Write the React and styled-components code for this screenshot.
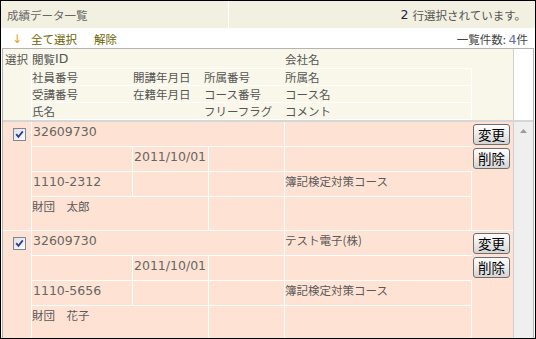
import styled, { createGlobalStyle } from 'styled-components'

const GlobalStyle = createGlobalStyle`
    html, body {
        margin: 0;
        padding: 0;
        background: #ffffff;
    }
    body {
        font-family: "Noto Sans CJK JP", sans-serif;
        font-size: 11.5px;
        color: #555555;
    }
`

const Frame = styled.div`
    width: 536px;
    height: 339px;
    box-sizing: border-box;
    border: 1px solid #000000;
    display: flex;
    flex-direction: column;
    overflow: hidden;
    background: #ffffff;
`

const TitleBar = styled.div`
    height: 28px;
    box-sizing: border-box;
    display: flex;
    background: #f2f0e1;
    border-bottom: 1px solid #ffffff;
`

const TitleCell = styled.div`
    width: 228px;
    box-sizing: border-box;
    border-right: 1px solid #ffffff;
    padding-left: 6px;
    display: flex;
    align-items: center;
    color: #666666;
    font-size: 11.5px;
`

const Status = styled.div`
    flex: 1;
    display: flex;
    align-items: center;
    justify-content: flex-end;
    padding-right: 9px;
    color: #555555;
    font-size: 11.5px;
`

const Count = styled.span`
    font-family: "DejaVu Sans", sans-serif;
    font-size: 12.5px;
    color: ${p => p.$tone || '#222244'};
    margin-right: ${p => p.$gap || 0}px;
`

const Toolbar = styled.div`
    height: 19px;
    display: flex;
    align-items: center;
    padding: 0 7px 0 11px;
`

const Arrow = styled.span`
    color: #e8a317;
    font-family: "DejaVu Sans", sans-serif;
    font-size: 12px;
    margin-right: 9px;
`

const ToolLink = styled.a`
    color: #6b6200;
    text-decoration: none;
    margin-right: 17px;
`

const ListCount = styled.span`
    margin-left: auto;
    color: #444444;
`

const Panel = styled.div`
    flex: 1;
    margin: 0 1px 0 1px;
    border: 1px solid #b4b4b4;
    border-bottom: none;
    display: flex;
    flex-direction: column;
    min-height: 0;
`

const HeadRow = styled.div`
    display: flex;
    border-bottom: 2px solid #d6d6d6;
`

const HeadGrid = styled.div`
    display: grid;
    grid-template-columns: 29px 101px 71px 81px 187px 41px;
    grid-template-rows: 20px 17px 17px 17px;
    background: #f8f7e9;
`

const HeadCell = styled.div`
    box-sizing: border-box;
    grid-column: ${p => p.$col};
    grid-row: ${p => p.$row};
    display: flex;
    align-items: ${p => (p.$top ? 'flex-start' : 'center')};
    padding-left: ${p => p.$pad || 0}px;
    padding-top: ${p => (p.$top ? 2 : 0)}px;
    border-bottom: ${p => (p.$b ? '1px solid #ffffff' : 'none')};
    border-right: ${p => (p.$r ? '1px solid #ffffff' : 'none')};
    color: #555555;
    white-space: nowrap;
`

const Latin = styled.span`
    font-family: "DejaVu Sans", sans-serif;
    font-size: 12.5px;
`

const ScrollHead = styled.div`
    flex: 1;
    border-left: 1px solid #cfcfcf;
    background: #ffffff;
`

const Body = styled.div`
    flex: 1;
    display: flex;
    min-height: 0;
    overflow: hidden;
`

const Records = styled.div`
    width: 510px;
    display: flex;
    flex-direction: column;
`

const Record = styled.div`
    display: grid;
    grid-template-columns: 29px 101px 76px 76px 187px 41px;
    grid-template-rows: 25px 25px 25px 34px;
    flex-shrink: 0;
    background: #fee3d4;
`

const Cell = styled.div`
    box-sizing: border-box;
    grid-column: ${p => p.$col};
    grid-row: ${p => p.$row};
    padding: 2px 0 0 ${p => p.$pad || 0}px;
    border-bottom: ${p => (p.$b ? '1px solid #ffffff' : 'none')};
    border-right: ${p => (p.$r ? '1px solid #ffffff' : 'none')};
    color: ${p => (p.$latin ? '#666666' : '#5a5a5a')};
    font-family: ${p => (p.$latin ? '"DejaVu Sans", ' : '')}"Noto Sans CJK JP", sans-serif;
    font-size: ${p => (p.$latin ? '12.5px' : '11.5px')};
    line-height: 15px;
    white-space: nowrap;
`

const SelectCell = styled.div`
    grid-column: 1;
    grid-row: 1 / 5;
    box-sizing: border-box;
    border-right: 1px solid #ffffff;
    border-bottom: 1px solid #ffffff;
    padding: 6px 0 0 10px;
`

const ActionCell = styled.div`
    grid-column: 6;
    grid-row: 1 / 5;
    box-sizing: border-box;
    border-bottom: 1px solid #ffffff;
    display: flex;
    flex-direction: column;
    gap: 3px;
    padding: 2px 0 0 1px;
`

const ActionButton = styled.button`
    width: 37px;
    height: 21px;
    padding: 0;
    border: 1px solid #6e6e6e;
    border-radius: 3px;
    background: linear-gradient(#fefefe, #e9e9e9 55%, #d4d4d4);
    color: #000000;
    font-family: "Noto Sans CJK JP", sans-serif;
    font-size: 13.5px;
    line-height: 17px;
`

const Scrollbar = styled.div`
    flex: 1;
    border-left: 1px solid #cfcfcf;
    background: #efefef;
    display: flex;
    justify-content: center;
    padding-top: 7px;
`

function CheckMark() {
    return (
        <svg width="13" height="13" viewBox="0 0 13 13">
            <defs>
                <linearGradient id="cbg" x1="0" y1="0" x2="1" y2="1">
                    <stop offset="0" stopColor="#dcdfe6" />
                    <stop offset="1" stopColor="#ffffff" />
                </linearGradient>
            </defs>
            <rect x="0.5" y="0.5" width="12" height="12" fill="url(#cbg)" stroke="#7e8796" />
            <path d="M3.2 6.2 L5.4 8.8 L9.8 3.4" fill="none" stroke="#2c3c9c" strokeWidth="1.8" />
        </svg>
    )
}

function UpArrow() {
    return (
        <svg width="7" height="4" viewBox="0 0 7 4">
            <path d="M0 4 L3.5 0 L7 4 Z" fill="#9a9a9a" />
        </svg>
    )
}

const rows = [
    { id: '32609730', company: '', opened: '2011/10/01', code: '1110-2312', course: '簿記検定対策コース', name: '財団\u3000太郎' },
    { id: '32609730', company: 'テスト電子(株)', opened: '2011/10/01', code: '1110-5656', course: '簿記検定対策コース', name: '財団\u3000花子' },
]

function RecordRow({ row }) {
    return (
        <Record>
            <SelectCell><CheckMark /></SelectCell>
            <Cell $col="2 / 5" $row="1" $b $r $latin $pad={1}>{row.id}</Cell>
            <Cell $col="5" $row="1" $b>{row.company}</Cell>
            <Cell $col="2" $row="2" $b $r />
            <Cell $col="3" $row="2" $b $r $latin $pad={1}>{row.opened}</Cell>
            <Cell $col="4" $row="2" $b $r />
            <Cell $col="5" $row="2" $b />
            <Cell $col="2" $row="3" $b $r $latin $pad={1}>{row.code}</Cell>
            <Cell $col="3" $row="3" $b $r />
            <Cell $col="4" $row="3" $b $r />
            <Cell $col="5" $row="3" $b $r>{row.course}</Cell>
            <Cell $col="2 / 4" $row="4" $b $r>{row.name}</Cell>
            <Cell $col="4" $row="4" $b $r />
            <Cell $col="5" $row="4" $b $r />
            <ActionCell>
                <ActionButton>変更</ActionButton>
                <ActionButton>削除</ActionButton>
            </ActionCell>
        </Record>
    )
}

export default function App() {
    return (
        <>
            <GlobalStyle />
            <Frame>
                <TitleBar>
                    <TitleCell>成績データ一覧</TitleCell>
                    <Status><Count $gap={4}>2</Count>行選択されています。</Status>
                </TitleBar>
                <Toolbar>
                    <Arrow>↓</Arrow>
                    <ToolLink href="#">全て選択</ToolLink>
                    <ToolLink href="#">解除</ToolLink>
                    <ListCount>一覧件数: <Count $tone="#5b6fa8">4</Count>件</ListCount>
                </Toolbar>
                <Panel>
                    <HeadRow>
                        <HeadGrid>
                            <HeadCell $col="1" $row="1 / 5" $r $top $pad={2}>選択</HeadCell>
                            <HeadCell $col="2 / 5" $row="1" $b>閲覧<Latin>ID</Latin></HeadCell>
                            <HeadCell $col="5" $row="1" $b>会社名</HeadCell>
                            <HeadCell $col="6" $row="1 / 5" />
                            <HeadCell $col="2" $row="2" $b>社員番号</HeadCell>
                            <HeadCell $col="3" $row="2" $b>開講年月日</HeadCell>
                            <HeadCell $col="4" $row="2" $b>所属番号</HeadCell>
                            <HeadCell $col="5" $row="2" $b $r>所属名</HeadCell>
                            <HeadCell $col="2" $row="3" $b>受講番号</HeadCell>
                            <HeadCell $col="3" $row="3" $b>在籍年月日</HeadCell>
                            <HeadCell $col="4" $row="3" $b>コース番号</HeadCell>
                            <HeadCell $col="5" $row="3" $b $r>コース名</HeadCell>
                            <HeadCell $col="2" $row="4" $b>氏名</HeadCell>
                            <HeadCell $col="3" $row="4" $b />
                            <HeadCell $col="4" $row="4" $b>フリーフラグ</HeadCell>
                            <HeadCell $col="5" $row="4" $b $r>コメント</HeadCell>
                        </HeadGrid>
                        <ScrollHead />
                    </HeadRow>
                    <Body>
                        <Records>
                            {rows.map((row, i) => <RecordRow key={i} row={row} />)}
                        </Records>
                        <Scrollbar><UpArrow /></Scrollbar>
                    </Body>
                </Panel>
            </Frame>
        </>
    )
}
